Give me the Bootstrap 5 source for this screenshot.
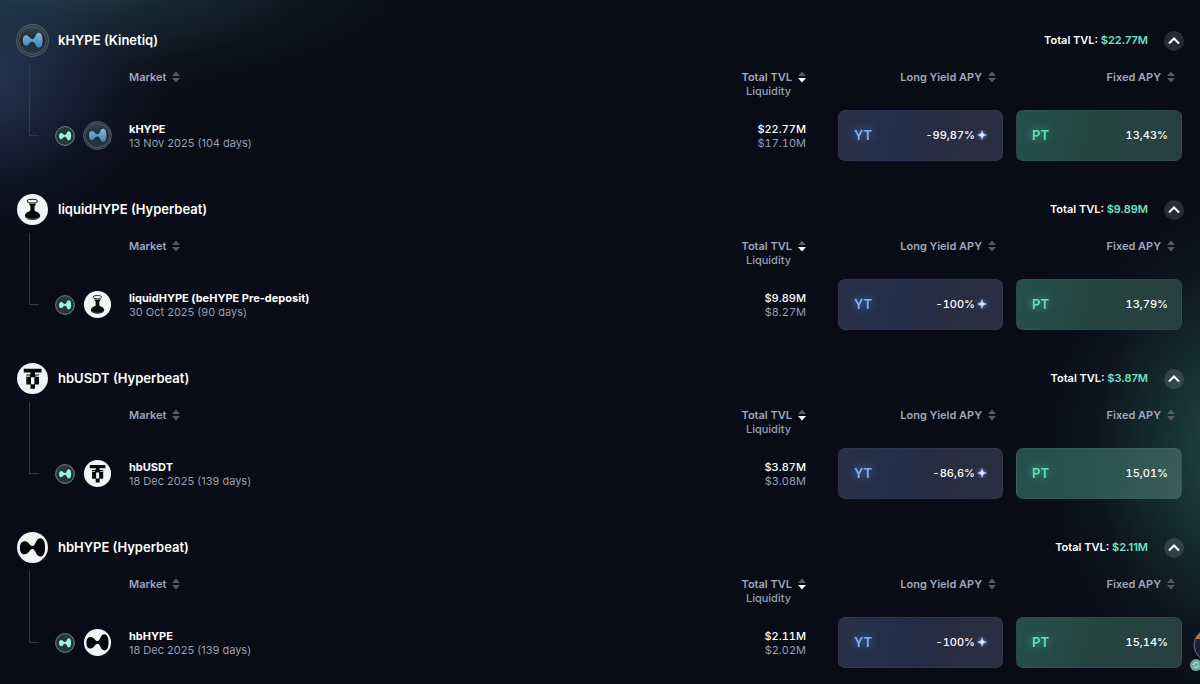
<!DOCTYPE html>
<html lang="en">
<head>
<meta charset="utf-8">
<meta name="viewport" content="width=device-width, initial-scale=1">
<title>Markets</title>
<link href="https://cdn.jsdelivr.net/npm/bootstrap@5.3.0/dist/css/bootstrap.min.css" rel="stylesheet">
<style>
  body {
    font-family: Inter, "Liberation Sans", sans-serif;
    font-size: 11px;
    line-height: 14px;
    color: #fff;
    min-height: 100vh;
    overflow-x: hidden;
    background:
      radial-gradient(ellipse 240px 190px at -20px 80px, rgba(46,64,102,.8), rgba(40,57,90,.6) 25%, rgba(32,44,70,.22) 58%, rgba(24,32,52,.07) 80%, transparent),
      radial-gradient(ellipse 480px 160px at 40px -30px, rgba(50,88,98,.85), rgba(36,70,78,.5) 32%, rgba(26,50,58,.2) 62%, rgba(20,36,44,.06) 82%, transparent),
      radial-gradient(ellipse 240px 310px at 1240px 450px, rgba(44,98,90,.75), rgba(34,78,74,.55) 30%, rgba(26,56,58,.2) 62%, rgba(20,40,44,.06) 82%, transparent),
      #090b16;
  }
  .pool { padding: 0 16px 32px; }
  .pool:first-child { padding-top: 24px; }
  .pool:last-child { padding-bottom: 16px; }
  .pool-head { height: 33px; }
  .pool-name { font-size: 13px; font-weight: 600; line-height: 16px; margin: 0 auto 1px 9px; }
  .pool-total { font-weight: 600; margin-bottom: 1px; }
  .mint { color: #6fe3c4; }
  .toggle { width: 20px; height: 20px; border-radius: 50%; background: rgba(255,255,255,.13); border: 0; color: #fff; margin-left: 16px; }
  .branch { width: 10px; height: 72px; margin: 7px 0 0 13px; border: solid #343a47; border-width: 0 0 1px 1px; flex: none; }
  .market-table { table-layout: fixed; margin-right: 2px; }
  .market-table th { height: 53px; padding: 13px 0 0; vertical-align: top; font-weight: 600; color: #a0a6be; }
  .market-table td { padding: 0; vertical-align: middle; }
  .market-table .c-icons { width: 90px; }
  .market-table .c-tvl { width: 120px; }
  .market-table .c-yt { width: 197px; padding-right: 7px; }
  .market-table .c-pt { width: 179px; padding-right: 7px; }
  .sort { background: none; border: 0; padding: 0; color: inherit; font: inherit; display: inline-flex; align-items: center; gap: 6px; }
  .sub { font-weight: 400; color: #979eb4; }
  .under { padding-right: 15px; font-weight: 500; }
  .market-name { font-weight: 700; color: #fff; text-decoration: none; }
  .money { font-variant-numeric: tabular-nums; }
  .apy { width: 100%; height: 51px; border-radius: 7px; color: #fff; font-size: 11px; font-weight: 500; font-variant-numeric: tabular-nums; padding: 0 14px 2px 15px; border: 1px solid rgba(255,255,255,.03); }
  .market-table .yt-box { padding-left: 32px; }
  .market-table .pt-box { padding-left: 13px; }
  .apy-yt { background: linear-gradient(100deg, #2a3146, #222e4c 38%, #282d40 65%, #2a2f42); }
  .apy-pt { background: linear-gradient(100deg, #264f4b, #24463f 45%, #293f40); padding-right: 13px; }
  .apy-pt.lit { background: linear-gradient(100deg, #264f4b, #2b5450 50%, #3c5c59); }
  .tag { font-size: 13px; font-weight: 600; }
  .apy-yt .tag { color: #86aef5; text-shadow: 0 0 8px #4f82ee; }
  .apy-yt svg { filter: drop-shadow(0 0 2px #4f82ee); margin-left: 1px; }
  .apy-pt .tag { color: #63dfb9; text-shadow: 0 0 8px #35b892; }
  .helper { position: fixed; right: -28px; bottom: 12px; width: 40px; height: 46px; background: none; border: 0; padding: 0; }
</style>
</head>
<body>
<main>
  <section class="pool">
    <div class="pool-head d-flex align-items-center">
      <svg width="33" height="33"><use href="#i-khype"/></svg>
      <h2 class="pool-name">kHYPE (Kinetiq)</h2>
      <span class="pool-total">Total TVL: <span class="mint">$22.77M</span></span>
      <button class="toggle p-0 d-flex" type="button" aria-label="Collapse kHYPE"><svg width="20" height="20"><use href="#i-up"/></svg></button>
    </div>
    <div class="d-flex">
      <div class="branch"></div>
      <table class="market-table flex-grow-1">
        <thead><tr>
          <th class="c-icons"></th>
          <th><button class="sort" type="button">Market <svg width="8" height="12"><use href="#i-sort"/></svg></button></th>
          <th class="c-tvl text-end"><button class="sort" type="button">Total TVL <svg width="8" height="12"><use href="#i-sorted"/></svg></button><div class="sub under">Liquidity</div></th>
          <th class="c-yt text-end"><button class="sort" type="button">Long Yield APY <svg width="8" height="12"><use href="#i-sort"/></svg></button></th>
          <th class="c-pt text-end"><button class="sort" type="button">Fixed APY <svg width="8" height="12"><use href="#i-sort"/></svg></button></th>
        </tr></thead>
        <tbody><tr>
          <td><div class="d-flex align-items-center gap-2 ms-3"><svg width="20" height="20"><use href="#i-chain"/></svg><svg width="29" height="29"><use href="#i-khype"/></svg></div></td>
          <td><a class="market-name" href="#">kHYPE</a><div class="sub">13 Nov 2025 (104 days)</div></td>
          <td class="text-end money"><div class="fw-medium">$22.77M</div><div class="sub">$17.10M</div></td>
          <td class="yt-box"><button class="apy apy-yt d-flex align-items-center justify-content-between" type="button"><span class="tag">YT</span><span class="d-flex align-items-center">-99,87%<svg width="12" height="12"><use href="#i-spark"/></svg></span></button></td>
          <td class="pt-box"><button class="apy apy-pt d-flex align-items-center justify-content-between" type="button"><span class="tag">PT</span><span>13,43%</span></button></td>
        </tr></tbody>
      </table>
    </div>
  </section>

  <section class="pool">
    <div class="pool-head d-flex align-items-center">
      <svg width="33" height="33"><use href="#i-glass"/></svg>
      <h2 class="pool-name">liquidHYPE (Hyperbeat)</h2>
      <span class="pool-total">Total TVL: <span class="mint">$9.89M</span></span>
      <button class="toggle p-0 d-flex" type="button" aria-label="Collapse liquidHYPE"><svg width="20" height="20"><use href="#i-up"/></svg></button>
    </div>
    <div class="d-flex">
      <div class="branch"></div>
      <table class="market-table flex-grow-1">
        <thead><tr>
          <th class="c-icons"></th>
          <th><button class="sort" type="button">Market <svg width="8" height="12"><use href="#i-sort"/></svg></button></th>
          <th class="c-tvl text-end"><button class="sort" type="button">Total TVL <svg width="8" height="12"><use href="#i-sorted"/></svg></button><div class="sub under">Liquidity</div></th>
          <th class="c-yt text-end"><button class="sort" type="button">Long Yield APY <svg width="8" height="12"><use href="#i-sort"/></svg></button></th>
          <th class="c-pt text-end"><button class="sort" type="button">Fixed APY <svg width="8" height="12"><use href="#i-sort"/></svg></button></th>
        </tr></thead>
        <tbody><tr>
          <td><div class="d-flex align-items-center gap-2 ms-3"><svg width="20" height="20"><use href="#i-chain"/></svg><svg width="29" height="29"><use href="#i-glass"/></svg></div></td>
          <td><a class="market-name" href="#">liquidHYPE (beHYPE Pre-deposit)</a><div class="sub">30 Oct 2025 (90 days)</div></td>
          <td class="text-end money"><div class="fw-medium">$9.89M</div><div class="sub">$8.27M</div></td>
          <td class="yt-box"><button class="apy apy-yt d-flex align-items-center justify-content-between" type="button"><span class="tag">YT</span><span class="d-flex align-items-center">-100%<svg width="12" height="12"><use href="#i-spark"/></svg></span></button></td>
          <td class="pt-box"><button class="apy apy-pt d-flex align-items-center justify-content-between" type="button"><span class="tag">PT</span><span>13,79%</span></button></td>
        </tr></tbody>
      </table>
    </div>
  </section>

  <section class="pool">
    <div class="pool-head d-flex align-items-center">
      <svg width="33" height="33"><use href="#i-usdt"/></svg>
      <h2 class="pool-name">hbUSDT (Hyperbeat)</h2>
      <span class="pool-total">Total TVL: <span class="mint">$3.87M</span></span>
      <button class="toggle p-0 d-flex" type="button" aria-label="Collapse hbUSDT"><svg width="20" height="20"><use href="#i-up"/></svg></button>
    </div>
    <div class="d-flex">
      <div class="branch"></div>
      <table class="market-table flex-grow-1">
        <thead><tr>
          <th class="c-icons"></th>
          <th><button class="sort" type="button">Market <svg width="8" height="12"><use href="#i-sort"/></svg></button></th>
          <th class="c-tvl text-end"><button class="sort" type="button">Total TVL <svg width="8" height="12"><use href="#i-sorted"/></svg></button><div class="sub under">Liquidity</div></th>
          <th class="c-yt text-end"><button class="sort" type="button">Long Yield APY <svg width="8" height="12"><use href="#i-sort"/></svg></button></th>
          <th class="c-pt text-end"><button class="sort" type="button">Fixed APY <svg width="8" height="12"><use href="#i-sort"/></svg></button></th>
        </tr></thead>
        <tbody><tr>
          <td><div class="d-flex align-items-center gap-2 ms-3"><svg width="20" height="20"><use href="#i-chain"/></svg><svg width="29" height="29"><use href="#i-usdt"/></svg></div></td>
          <td><a class="market-name" href="#">hbUSDT</a><div class="sub">18 Dec 2025 (139 days)</div></td>
          <td class="text-end money"><div class="fw-medium">$3.87M</div><div class="sub">$3.08M</div></td>
          <td class="yt-box"><button class="apy apy-yt d-flex align-items-center justify-content-between" type="button"><span class="tag">YT</span><span class="d-flex align-items-center">-86,6%<svg width="12" height="12"><use href="#i-spark"/></svg></span></button></td>
          <td class="pt-box"><button class="apy apy-pt lit d-flex align-items-center justify-content-between" type="button"><span class="tag">PT</span><span>15,01%</span></button></td>
        </tr></tbody>
      </table>
    </div>
  </section>

  <section class="pool">
    <div class="pool-head d-flex align-items-center">
      <svg width="33" height="33"><use href="#i-hb"/></svg>
      <h2 class="pool-name">hbHYPE (Hyperbeat)</h2>
      <span class="pool-total">Total TVL: <span class="mint">$2.11M</span></span>
      <button class="toggle p-0 d-flex" type="button" aria-label="Collapse hbHYPE"><svg width="20" height="20"><use href="#i-up"/></svg></button>
    </div>
    <div class="d-flex">
      <div class="branch"></div>
      <table class="market-table flex-grow-1">
        <thead><tr>
          <th class="c-icons"></th>
          <th><button class="sort" type="button">Market <svg width="8" height="12"><use href="#i-sort"/></svg></button></th>
          <th class="c-tvl text-end"><button class="sort" type="button">Total TVL <svg width="8" height="12"><use href="#i-sorted"/></svg></button><div class="sub under">Liquidity</div></th>
          <th class="c-yt text-end"><button class="sort" type="button">Long Yield APY <svg width="8" height="12"><use href="#i-sort"/></svg></button></th>
          <th class="c-pt text-end"><button class="sort" type="button">Fixed APY <svg width="8" height="12"><use href="#i-sort"/></svg></button></th>
        </tr></thead>
        <tbody><tr>
          <td><div class="d-flex align-items-center gap-2 ms-3"><svg width="20" height="20"><use href="#i-chain"/></svg><svg width="29" height="29"><use href="#i-hb"/></svg></div></td>
          <td><a class="market-name" href="#">hbHYPE</a><div class="sub">18 Dec 2025 (139 days)</div></td>
          <td class="text-end money"><div class="fw-medium">$2.11M</div><div class="sub">$2.02M</div></td>
          <td class="yt-box"><button class="apy apy-yt d-flex align-items-center justify-content-between" type="button"><span class="tag">YT</span><span class="d-flex align-items-center">-100%<svg width="12" height="12"><use href="#i-spark"/></svg></span></button></td>
          <td class="pt-box"><button class="apy apy-pt d-flex align-items-center justify-content-between" type="button"><span class="tag">PT</span><span>15,14%</span></button></td>
        </tr></tbody>
      </table>
    </div>
  </section>
</main>

<button class="helper" type="button" aria-label="Assistant">
  <svg width="40" height="46" viewBox="0 0 40 46" class="d-block">
    <clipPath id="face"><circle cx="22" cy="19" r="16"/></clipPath>
    <circle cx="22" cy="19" r="16" fill="#1b2236"/>
    <path d="M0 7H40V13H0Z" fill="#a9773a" clip-path="url(#face)"/>
    <circle cx="22" cy="19" r="16" fill="none" stroke="#6d7684"/>
    <circle cx="8" cy="39" r="6" fill="#6aa79f"/>
    <path d="M5.500 39A2.500 2.500 0 0 1 10 37.500M10.500 39A2.500 2.500 0 0 1 6 40.500" fill="none" stroke="#dff5f0"/>
  </svg>
</button>

<svg width="0" height="0" class="position-absolute" aria-hidden="true">
  <defs>
    <linearGradient id="blue" x1="0" y1="0" x2="0" y2="1"><stop offset="0" stop-color="#7cbbe0"/><stop offset="1" stop-color="#3f80b4"/></linearGradient>
    <linearGradient id="coin" x1="0" y1="0" x2="0" y2="1"><stop offset="0" stop-color="#354451"/><stop offset=".5" stop-color="#20272e"/><stop offset="1" stop-color="#2c3943"/></linearGradient>
    <path id="bow" d="M6.500 16C6.500 12.500 8 11 10 11C12.500 11 13.200 14.500 16 14.500C19.200 14.500 18.600 8.500 22 8.500C24.600 8.500 25.800 11.500 25.800 16C25.800 20.500 24.600 23 22 23C18.800 23 19.200 17.200 16 17.200C13.200 17.200 12.500 21 10 21C8 21 6.500 19.500 6.500 16Z"/>
    <symbol id="i-khype" viewBox="0 0 32 32"><circle cx="16" cy="16" r="15.400" fill="#27323d" stroke="#50606d"/><circle cx="16" cy="16" r="13.300" fill="url(#coin)" stroke="#5f6c76" stroke-width=".8"/><use href="#bow" fill="url(#blue)"/></symbol>
    <symbol id="i-glass" viewBox="0 0 32 32"><circle cx="16" cy="16" r="15" fill="#f3f4f6"/><ellipse cx="15.800" cy="7.900" rx="4.800" ry="1.900" fill="#f3f4f6" stroke="#15171a" stroke-width="1"/><path d="M12.300 10.300C13.500 10.800 18.500 10.800 19.700 10.300L18 13V16.800C18 18 21 18.400 22.300 19.800H9.700C11 18.400 14 18 14 16.800V13Z" fill="#080a0c"/><ellipse cx="16" cy="22" rx="7.400" ry="4.200" fill="#080a0c"/><path d="M9 23.500Q16 27.500 23 23.500" stroke="#888d92" stroke-width=".6" fill="none"/></symbol>
    <symbol id="i-usdt" viewBox="0 0 32 32"><circle cx="16" cy="16" r="15" fill="#f3f4f6"/><path d="M7.500 6.500H24.700V10.300H18.400V12H22.300V21.800H18.400V26H14V21.800H10V12H14V10.300H7.500Z" fill="#090a0c"/><path d="M14.500 14.800H17.800V21.600H14.500ZM10 13.200H13.400V14.200H10ZM19 13.200H22.300V14.200H19Z" fill="#f3f4f6"/></symbol>
    <symbol id="i-hb" viewBox="0 0 32 32"><circle cx="16" cy="16" r="15" fill="#f3f4f6"/><path d="M3.800 16.500C3.800 12 5.500 10 8.500 10C12.500 10 13 14.600 16 14.600C19.300 14.600 18.800 7 23.700 7C26.800 7 28.200 11 28.200 16C28.200 21 26.800 24.800 23.700 24.800C19 24.800 19.300 17.500 16 17.500C13 17.500 12.500 22.600 8.500 22.600C5.500 22.600 3.800 21 3.800 16.500Z" fill="#050608"/></symbol>
    <symbol id="i-chain" viewBox="0 0 32 32"><circle cx="16" cy="16" r="15" fill="#24383b" stroke="#7d8b8f" stroke-width="1.500"/><use href="#bow" fill="#9cf5df"/></symbol>
    <symbol id="i-sort" viewBox="0 0 8 12"><path d="M4 0.500L8 5H0Z" fill="#555a66"/><path d="M4 11.500L8 7H0Z" fill="#555a66"/></symbol>
    <symbol id="i-sorted" viewBox="0 0 8 12"><path d="M4 0.500L8 5H0Z" fill="#555a66"/><path d="M4 11.500L8 7H0Z" fill="#fff"/></symbol>
    <symbol id="i-up" viewBox="0 0 20 20"><path d="M5 12.500L10 7.500L15 12.500" fill="none" stroke="#fff" stroke-width="2"/></symbol>
    <symbol id="i-spark" viewBox="0 0 12 12"><path d="M6 1.500Q6.300 5.700 10.500 6Q6.300 6.300 6 10.500Q5.700 6.300 1.500 6Q5.700 5.700 6 1.500Z" fill="#dce8ff" stroke="#dce8ff" stroke-width=".4"/></symbol>
  </defs>
</svg>
<script src="https://cdn.jsdelivr.net/npm/bootstrap@5.3.0/dist/js/bootstrap.bundle.min.js"></script>
</body>
</html>
